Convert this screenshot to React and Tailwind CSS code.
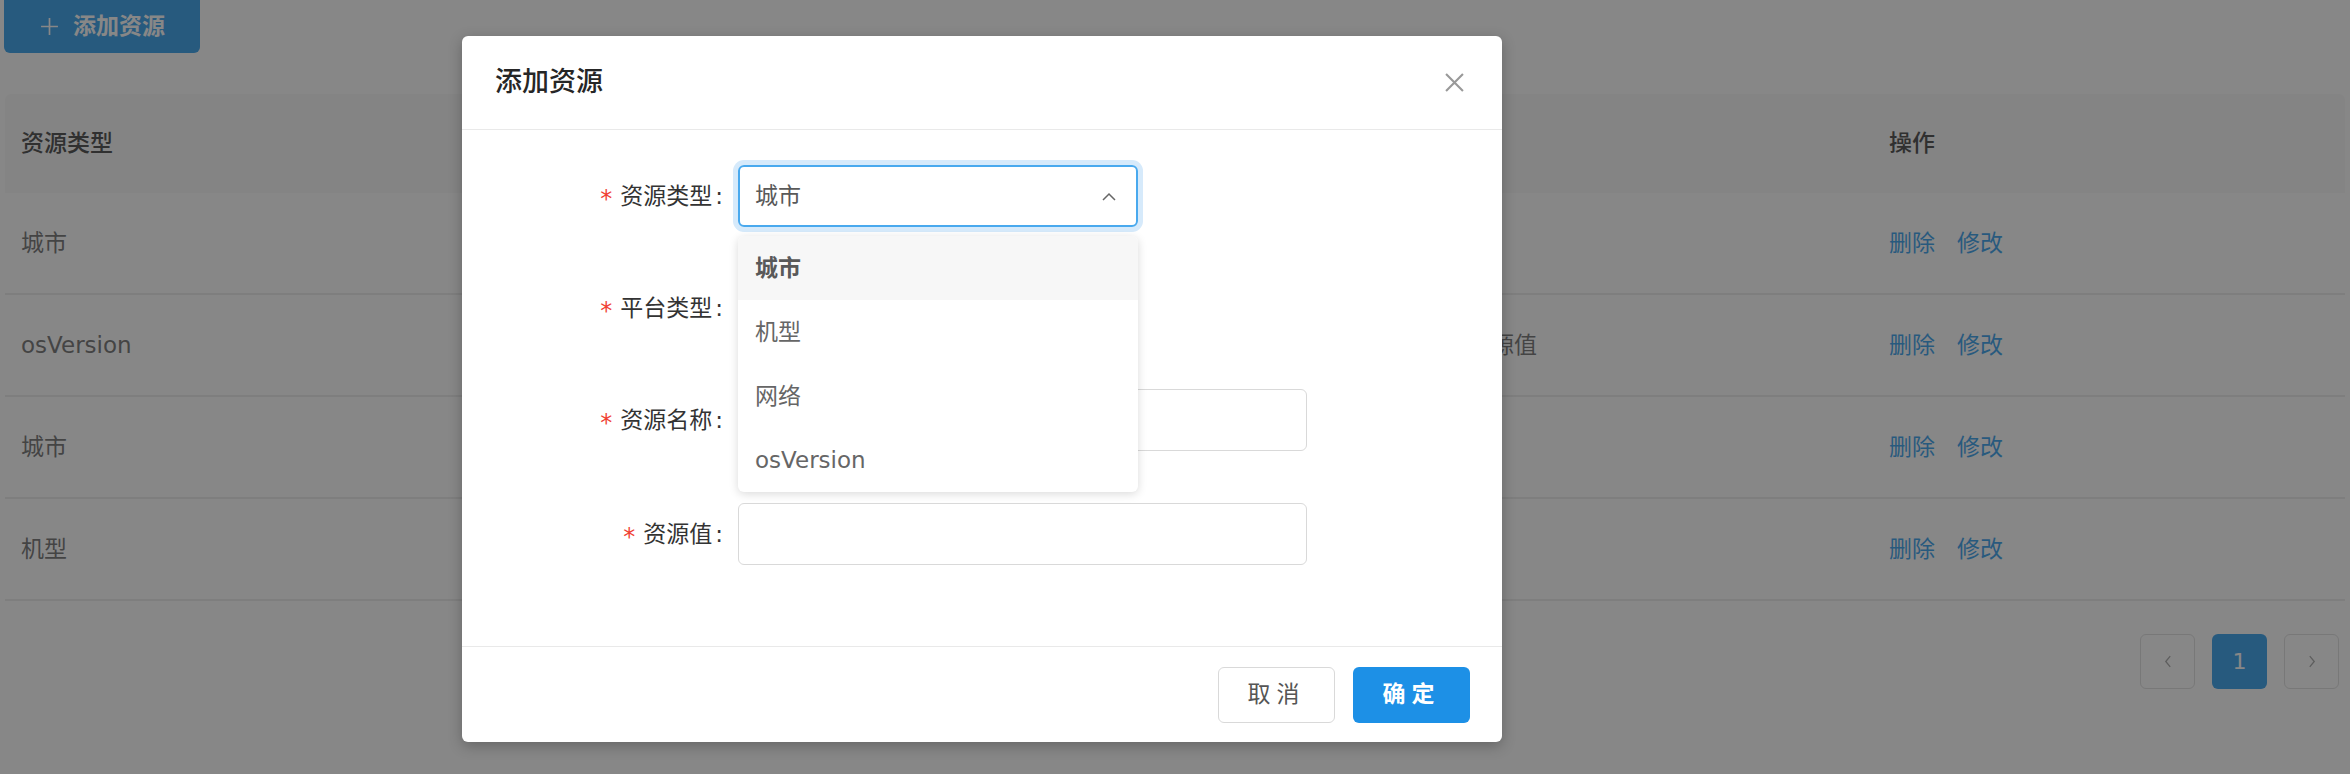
import React from "react";

const rows = [
  { type: "城市", name: "", value: "" },
  { type: "osVersion", name: "", value: "测试资源值" },
  { type: "城市", name: "", value: "" },
  { type: "机型", name: "", value: "" },
];

const options = ["城市", "机型", "网络", "osVersion"];

function Chevron({ dir = "up", className = "" }) {
  const d =
    dir === "up"
      ? "M1 8 L7 2 L13 8"
      : dir === "left"
      ? "M7 1 L2 7 L7 13"
      : "M2 1 L7 7 L2 13";
  const box = dir === "up" ? "0 0 14 9" : "0 0 9 14";
  return (
    <svg viewBox={box} className={className} fill="none" stroke="currentColor" strokeWidth="1.5">
      <path d={d} />
    </svg>
  );
}

function FormLabel({ children }) {
  return (
    <div className="w-[276px] shrink-0 flex items-center justify-end pr-[15px] text-[23px] text-[#333]">
      <span className="text-[#f04134] text-[24px] leading-none mr-[8px] mt-[6px]">*</span>
      <span>{children}</span>
      <span className="ml-[3px]">:</span>
    </div>
  );
}

function Modal() {
  return (
    <div className="absolute left-[462px] top-[36px] w-[1040px] h-[706px] bg-white rounded-[6px] shadow-[0_4px_14px_rgba(0,0,0,0.25)] flex flex-col">
      <div className="h-[94px] shrink-0 flex items-center justify-between pl-[33px] pr-[38px] border-b-[1.5px] border-[#e9e9e9]">
        <span className="text-[27px] font-medium text-[#262626]">添加资源</span>
        <svg viewBox="0 0 18 18" className="w-[19px] h-[19px] text-[#999]" stroke="currentColor" strokeWidth="2">
          <path d="M1 1 L17 17 M17 1 L1 17" />
        </svg>
      </div>

      <div className="flex-1 flex flex-col pt-[35px]">
        <div className="flex items-center h-[62px]">
          <FormLabel>资源类型</FormLabel>
          <div className="relative w-[400px] h-[62px]">
            <div className="w-full h-full rounded-[6px] border-2 border-[#49a9ee] ring-[5px] ring-[#d6eafb] flex items-center justify-between pl-[15px] pr-[20px] text-[23px] text-[#595959]">
              <span>城市</span>
              <Chevron dir="up" className="w-[14px] h-[9px] text-[#666]" />
            </div>
            <div className="absolute left-0 top-[71px] w-full z-10 bg-white rounded-[6px] shadow-[0_2px_10px_rgba(0,0,0,0.15)] overflow-hidden">
              {options.map((o, i) => (
                <div
                  key={o}
                  className={
                    i === 0
                      ? "h-[64px] flex items-center px-[17px] text-[23px] bg-[#f7f7f7] font-semibold text-[#595959]"
                      : "h-[64px] flex items-center px-[17px] text-[23px] text-[#666]"
                  }
                >
                  {o}
                </div>
              ))}
            </div>
          </div>
        </div>

        <div className="flex items-center h-[62px] mt-[50px]">
          <FormLabel>平台类型</FormLabel>
          <div className="w-[400px] h-[62px] rounded-[6px] border-[1.5px] border-[#d9d9d9]"></div>
        </div>

        <div className="flex items-center h-[62px] mt-[50px]">
          <FormLabel>资源名称</FormLabel>
          <div className="w-[569px] h-[62px] rounded-[6px] border-[1.5px] border-[#d9d9d9]"></div>
        </div>

        <div className="flex items-center h-[62px] mt-[52px]">
          <FormLabel>资源值</FormLabel>
          <div className="w-[569px] h-[62px] rounded-[6px] border-[1.5px] border-[#d9d9d9]"></div>
        </div>
      </div>

      <div className="h-[96px] shrink-0 border-t-[1.5px] border-[#e9e9e9] flex items-center justify-end gap-[18px] pr-[32px]">
        <button className="w-[117px] h-[56px] rounded-[6px] border-[1.5px] border-[#d9d9d9] bg-white text-[23px] text-[#555] tracking-[6px]">
          取消
        </button>
        <button className="w-[117px] h-[56px] rounded-[6px] bg-[#1d90e6] text-[23px] font-bold text-white tracking-[6px]">
          确定
        </button>
      </div>
    </div>
  );
}

export default function App() {
  return (
    <div className="relative w-[2350px] h-[774px] overflow-hidden bg-white font-['DejaVu_Sans','Noto_Sans_CJK_SC',sans-serif]">
      <div className="px-[4px]">
        <button className="-mt-[6px] w-[196px] h-[59px] pt-[6px] rounded-[6px] bg-[#108ee9] text-white text-[23px] font-bold flex items-center pl-[36px] gap-[14px]">
          <svg viewBox="0 0 18 18" className="w-[19px] h-[19px]" stroke="currentColor" strokeWidth="1.6">
            <path d="M9 1 V17 M1 9 H17" />
          </svg>
          <span>添加资源</span>
        </button>

        <div className="mt-[41px] ml-[1px] w-[2340px]">
          <div className="grid grid-cols-[695px_706px_467px_1fr] h-[99px] items-center bg-[#f7f7f7] rounded-t-[6px] text-[23px] font-medium text-[#262626]">
            <div className="px-[16px]">资源类型</div>
            <div className="px-[16px]">资源名称</div>
            <div className="px-[16px]">资源值</div>
            <div className="px-[16px]">操作</div>
          </div>
          {rows.map((r, i) => (
            <div
              key={i}
              className="grid grid-cols-[695px_706px_467px_1fr] h-[102px] items-center border-b-2 border-[#e9e9e9] text-[23px] text-[#595959]"
            >
              <div className="px-[16px]">{r.type}</div>
              <div className="px-[16px]">{r.name}</div>
              <div className="px-[16px]">{r.value}</div>
              <div className="px-[16px] flex gap-[22px] text-[#108ee9]">
                <span>删除</span>
                <span>修改</span>
              </div>
            </div>
          ))}
        </div>

        <div className="mt-[33px] flex justify-end pr-[7px] gap-[17px]">
          <div className="w-[55px] h-[55px] rounded-[6px] border-[1.5px] border-[#d9d9d9] flex items-center justify-center text-[#999]">
            <Chevron dir="left" className="w-[8px] h-[13px]" />
          </div>
          <div className="w-[55px] h-[55px] rounded-[6px] bg-[#108ee9] flex items-center justify-center text-white text-[22px]">
            1
          </div>
          <div className="w-[55px] h-[55px] rounded-[6px] border-[1.5px] border-[#d9d9d9] flex items-center justify-center text-[#999]">
            <Chevron dir="right" className="w-[8px] h-[13px]" />
          </div>
        </div>
      </div>

      <div className="absolute inset-0 bg-[rgba(55,55,55,0.6)]">
        <Modal />
      </div>
    </div>
  );
}
